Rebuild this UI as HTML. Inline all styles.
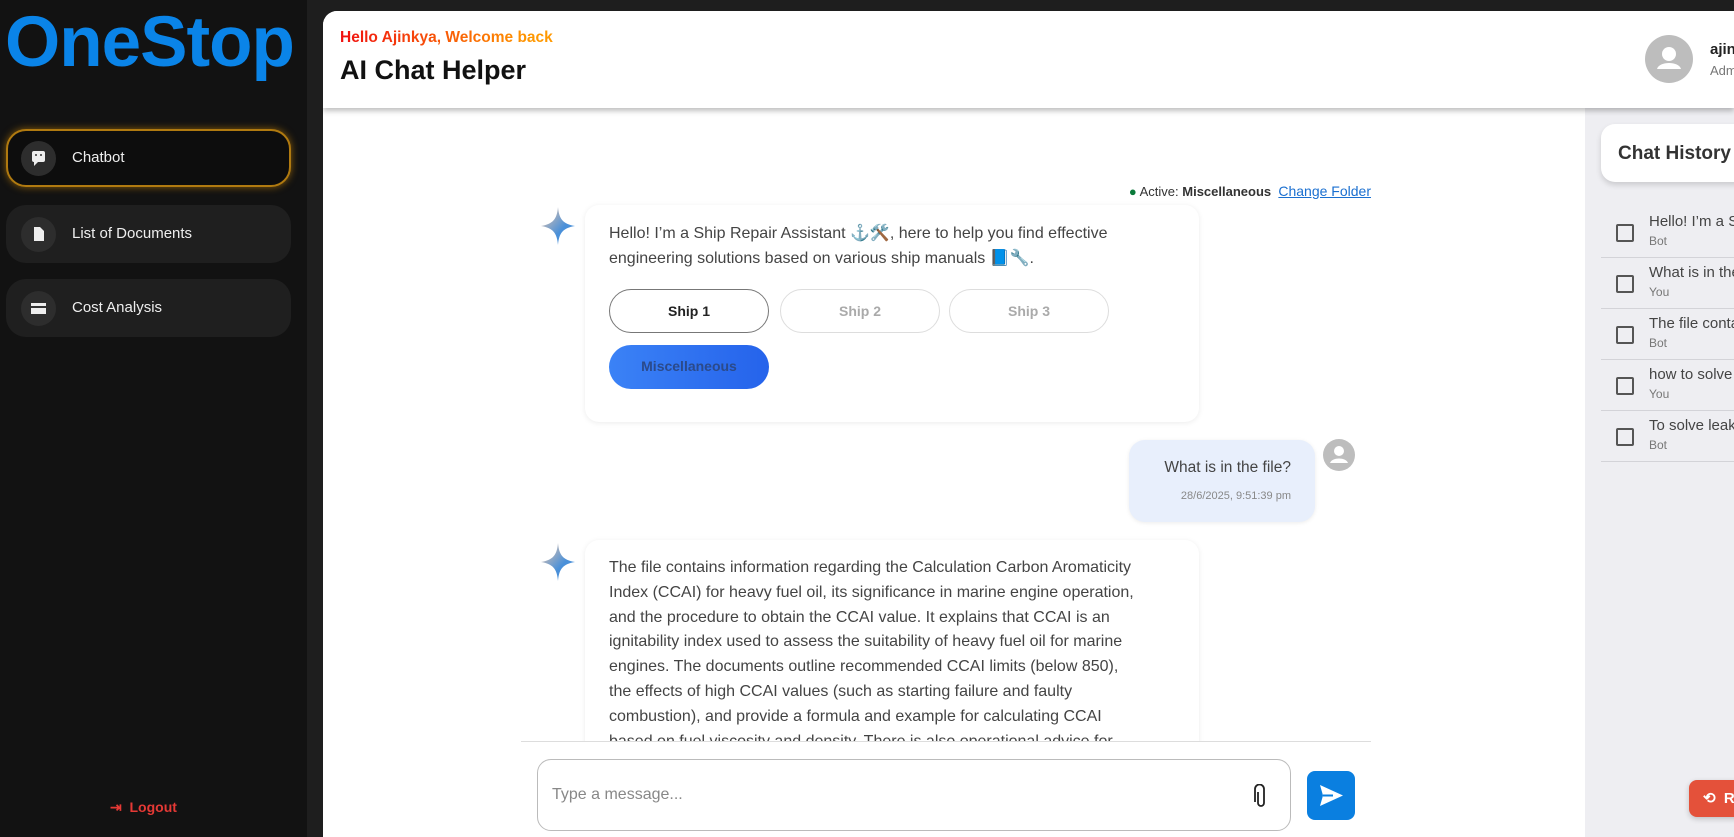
<!DOCTYPE html>
<html><head><meta charset="utf-8">
<style>
*{box-sizing:border-box;margin:0;padding:0}
body{width:1734px;height:837px;overflow:hidden;background:#1e1e1e;font-family:"Liberation Sans",sans-serif;position:relative}
.side{position:absolute;left:0;top:0;width:307px;height:837px;background:#121212}
.logo{position:absolute;left:5px;top:2px;font-size:71px;font-weight:bold;color:#0a84e8;letter-spacing:-1px}
.nav{position:absolute;left:6px;width:285px;height:58px;border-radius:20px;background:#1f1f1f;color:#eee;font-size:15px}
.nav .ic{position:absolute;left:15px;top:12px;width:35px;height:35px;border-radius:50%;background:#2d2d2d}
.nav span{position:absolute;left:66px;top:20px}
.act{background:#0d0d0d;border:2px solid #b07a10;box-shadow:0 0 8px #8a5d0a}
.main{position:absolute;left:323px;top:11px;width:1411px;height:826px;background:#fff;border-top-left-radius:14px;overflow:hidden}
.hdr{position:absolute;left:0;top:0;width:1411px;height:97px;background:#fff;box-shadow:0 3px 5px rgba(0,0,0,.25);z-index:2}
.right{position:absolute;left:1262px;top:97px;width:149px;height:729px;background:#eeeef2}
.card{position:absolute;background:#fff;border-radius:14px;box-shadow:0 1px 6px rgba(0,0,0,.08)}
.txt{color:#444;font-size:16px;line-height:24.5px}
.btn{position:absolute;width:160px;height:44px;border-radius:22px;border:1px solid #ddd;font-size:14px;font-weight:bold;color:#aaa;text-align:center;line-height:42px}
.hrow{position:absolute;left:16px;width:140px;height:51px;border-bottom:1px solid #d3d3d8}
.hrow i{position:absolute;left:15px;top:17px;width:18px;height:18px;border:2px solid #555;border-radius:2px}
.hrow b{position:absolute;left:48px;top:6px;font-weight:normal;font-size:15px;color:#444;white-space:nowrap}
.hrow s{position:absolute;left:48px;top:27px;text-decoration:none;font-size:12px;color:#777}
</style></head><body>
<div class="side">
 <div class="logo">OneStop</div>
 <div class="nav act" style="top:129px"><div class="ic" style="left:13px;top:10px"><svg width="35" height="35"><rect x="11" y="10" width="13" height="11" rx="2" fill="#eee"/><path d="M13 21v4l4-4z" fill="#eee"/><circle cx="15" cy="14" r="1" fill="#333"/><circle cx="20" cy="14" r="1" fill="#333"/></svg></div><span style="top:18px;left:64px">Chatbot</span></div>
 <div class="nav" style="top:205px"><div class="ic"><svg width="35" height="35"><path d="M13 10h6l4 4v10h-10z" fill="#eee"/></svg></div><span>List of Documents</span></div>
 <div class="nav" style="top:279px"><div class="ic"><svg width="35" height="35"><rect x="10" y="12" width="15" height="11" fill="#eee"/><rect x="10" y="15" width="15" height="2" fill="#333"/></svg></div><span>Cost Analysis</span></div>
 <div style="position:absolute;left:110px;top:799px;color:#e53935;font-size:14px;font-weight:bold">⇥&nbsp; Logout</div>
</div>
<div class="main">
 <div class="hdr">
  <div style="position:absolute;left:17px;top:18px;font-size:15.5px;font-weight:bold;background:linear-gradient(90deg,#f01010,#ff9800 90%);-webkit-background-clip:text;color:transparent">Hello Ajinkya, Welcome back</div>
  <div style="position:absolute;left:17px;top:44px;font-size:27px;font-weight:bold;color:#111">AI Chat Helper</div>
  <div style="position:absolute;left:1322px;top:24px;width:48px;height:48px;border-radius:50%;background:#bdbdbd"><svg width="48" height="48"><circle cx="24" cy="19" r="7" fill="#fff"/><path d="M12 34c2-8 22-8 24 0z" fill="#fff"/></svg></div>
  <div style="position:absolute;left:1387px;top:30px;font-size:15px;font-weight:bold;color:#222">ajinkya</div>
  <div style="position:absolute;left:1387px;top:52px;font-size:13px;color:#777">Admin</div>
 </div>
 <div style="position:absolute;right:363px;top:172px;font-size:13px;color:#333"><span style="color:#0a7a3a">●</span> Active: <b>Miscellaneous</b> &nbsp;<span style="color:#1a6fd0;text-decoration:underline;font-size:14px">Change Folder</span></div>
 <svg style="position:absolute;left:218px;top:196px" width="34" height="38"><defs><linearGradient id="g" x1="0" y1="0" x2="1" y2="1"><stop offset="0" stop-color="#f3c9a8"/><stop offset=".6" stop-color="#4a90d9"/></linearGradient></defs><path d="M17 0C18 12 22 17 34 19C22 21 18 26 17 38C16 26 12 21 0 19C12 17 16 12 17 0z" fill="url(#g)"/></svg>
 <div class="card" style="left:262px;top:194px;width:614px;height:217px">
  <div class="txt" style="position:absolute;left:24px;top:17px">Hello! I’m a Ship Repair Assistant ⚓🛠️, here to help you find effective<br>engineering solutions based on various ship manuals 📘🔧.</div>
  <div class="btn" style="left:24px;top:84px;border-color:#777;color:#222">Ship 1</div>
  <div class="btn" style="left:195px;top:84px">Ship 2</div>
  <div class="btn" style="left:364px;top:84px">Ship 3</div>
  <div class="btn" style="left:24px;top:140px;border:none;background:linear-gradient(90deg,#3b82f6,#2563eb);color:#2b4a8a">Miscellaneous</div>
 </div>
 <div style="position:absolute;left:806px;top:429px;width:186px;height:82px;border-radius:16px;background:#e8effc;box-shadow:0 1px 4px rgba(0,0,0,.08)">
  <div style="position:absolute;right:24px;top:19px;font-size:15.5px;color:#444">What is in the file?</div>
  <div style="position:absolute;right:24px;top:50px;font-size:11px;color:#888">28/6/2025, 9:51:39 pm</div>
 </div>
 <div style="position:absolute;left:1000px;top:428px;width:32px;height:32px;border-radius:50%;background:#bdbdbd"><svg width="32" height="32"><circle cx="16" cy="12" r="5" fill="#fff"/><path d="M7 24c2-6 16-6 18 0z" fill="#fff"/></svg></div>
 <svg style="position:absolute;left:218px;top:532px" width="34" height="38"><path d="M17 0C18 12 22 17 34 19C22 21 18 26 17 38C16 26 12 21 0 19C12 17 16 12 17 0z" fill="url(#g)"/></svg>
 <div class="card" style="left:262px;top:529px;width:614px;height:300px">
  <div class="txt" style="position:absolute;left:24px;top:16px;width:530px;line-height:24.8px">The file contains information regarding the Calculation Carbon Aromaticity Index (CCAI) for heavy fuel oil, its significance in marine engine operation, and the procedure to obtain the CCAI value. It explains that CCAI is an ignitability index used to assess the suitability of heavy fuel oil for marine engines. The documents outline recommended CCAI limits (below 850), the effects of high CCAI values (such as starting failure and faulty combustion), and provide a formula and example for calculating CCAI based on fuel viscosity and density. There is also operational advice for</div>
 </div>
 <div style="position:absolute;left:198px;top:730px;width:850px;height:96px;background:#fff;border-top:1px solid #ddd"></div>
 <div style="position:absolute;left:214px;top:748px;width:754px;height:72px;border:1px solid #bbb;border-radius:14px;background:#fff">
  <div style="position:absolute;left:14px;top:26px;font-size:16px;color:#888">Type a message...</div>
  <svg style="position:absolute;right:22px;top:24px" width="14" height="26"><path d="M4 8v11a3 3 0 0 0 6 0V5a4.5 4.5 0 0 0-9 0v13" fill="none" stroke="#222" stroke-width="1.8"/></svg>
 </div>
 <div style="position:absolute;left:984px;top:760px;width:48px;height:49px;border-radius:8px;background:#0a7fe0"><svg width="48" height="49"><path d="M13 14l23 10.5L13 35l3-10.5z" fill="#fff"/><path d="M16 24.5h10" stroke="#0a7fe0" stroke-width="2"/></svg></div>
 <div class="right">
  <div style="position:absolute;left:16px;top:16px;width:160px;height:58px;background:#fff;border-radius:14px;box-shadow:0 3px 6px rgba(0,0,0,.15)"><div style="position:absolute;left:17px;top:19px;font-size:19px;font-weight:bold;color:#333">Chat History</div></div>
  <div class="hrow" style="top:99px"><i></i><b>Hello! I’m a Ship</b><s>Bot</s></div>
  <div class="hrow" style="top:150px"><i></i><b>What is in the</b><s>You</s></div>
  <div class="hrow" style="top:201px"><i></i><b>The file contains</b><s>Bot</s></div>
  <div class="hrow" style="top:252px"><i></i><b>how to solve</b><s>You</s></div>
  <div class="hrow" style="top:303px"><i></i><b>To solve leak</b><s>Bot</s></div>
  <div style="position:absolute;left:104px;top:672px;width:60px;height:37px;border-radius:8px;background:#e4513a;box-shadow:0 2px 6px rgba(0,0,0,.2);color:#fff;font-size:15px;font-weight:bold;line-height:37px;padding-left:14px">⟲ &nbsp;R</div>
 </div>
</div>
</body></html>
